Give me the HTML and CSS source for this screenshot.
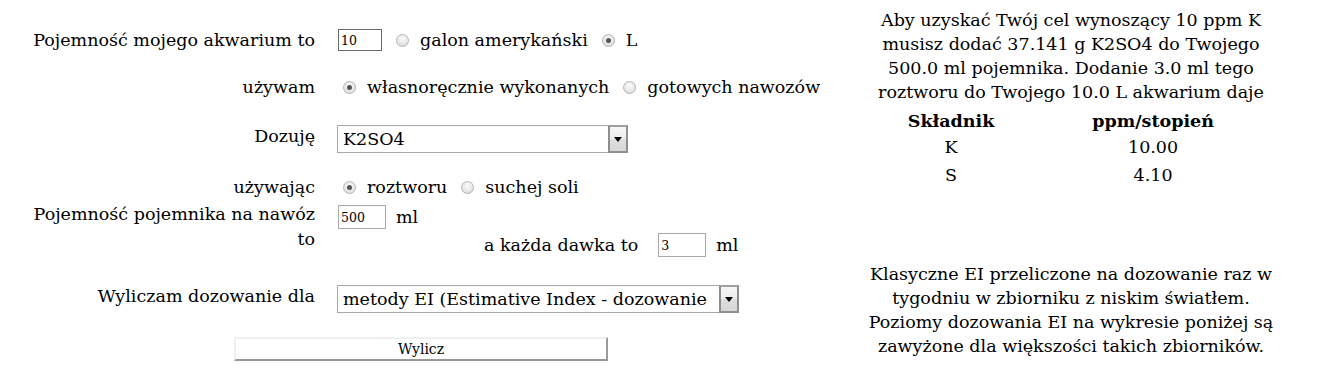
FILE: index.html
```html
<!DOCTYPE html>
<html lang="pl">
<head>
<meta charset="utf-8">
<title>Kalkulator nawozów</title>
<link rel="stylesheet" href="styles.css">
</head>
<body>
<div class="page">
  <form class="calc">
    <div class="row r1">
      <label class="lbl">Pojemność mojego akwarium to</label>
      <div class="ctl">
        <input class="num focus" type="text" value="10">
        <span class="radio"></span><span class="opt">galon amerykański</span>
        <span class="radio on"></span><span class="opt">L</span>
      </div>
    </div>
    <div class="row r2">
      <label class="lbl">używam</label>
      <div class="ctl">
        <span class="radio on first"></span><span class="opt">własnoręcznie wykonanych</span>
        <span class="radio"></span><span class="opt">gotowych nawozów</span>
      </div>
    </div>
    <div class="row r3">
      <label class="lbl">Dozuję</label>
      <div class="ctl">
        <div class="sel w1"><span class="val">K2SO4</span><span class="arrow"><span class="tri"></span></span></div>
      </div>
    </div>
    <div class="row r4">
      <label class="lbl">używając</label>
      <div class="ctl">
        <span class="radio on first"></span><span class="opt">roztworu</span>
        <span class="radio"></span><span class="opt">suchej soli</span>
      </div>
    </div>
    <div class="row r5">
      <label class="lbl two">Pojemność pojemnika na nawóz<br>to</label>
      <div class="ctl col">
        <div class="line"><input class="num w2" type="text" value="500"><span class="unit">ml</span></div>
        <div class="line dose"><span class="dlbl">a każda dawka to</span><input class="num w3" type="text" value="3"><span class="unit">ml</span></div>
      </div>
    </div>
    <div class="row r6">
      <label class="lbl">Wyliczam dozowanie dla</label>
      <div class="ctl">
        <div class="sel w4"><span class="val">metody EI (Estimative Index - dozowanie</span><span class="arrow"><span class="tri"></span></span></div>
      </div>
    </div>
    <div class="btnrow">
      <button type="button" class="btn">Wylicz</button>
    </div>
  </form>
  <aside class="result">
    <p class="msg">Aby uzyskać Twój cel wynoszący 10 ppm K<br>musisz dodać 37.141 g K2SO4 do Twojego<br>500.0 ml pojemnika. Dodanie 3.0 ml tego<br>roztworu do Twojego 10.0 L akwarium daje</p>
    <table class="tbl">
      <thead><tr><th class="c1">Składnik</th><th class="c2">ppm/stopień</th></tr></thead>
      <tbody>
        <tr><td class="c1">K</td><td class="c2">10.00</td></tr>
        <tr class="last"><td class="c1">S</td><td class="c2">4.10</td></tr>
      </tbody>
    </table>
    <p class="note">Klasyczne EI przeliczone na dozowanie raz w<br>tygodniu w zbiorniku z niskim światłem.<br>Poziomy dozowania EI na wykresie poniżej są<br>zawyżone dla większości takich zbiorników.</p>
  </aside>
</div>
</body>
</html>
```

FILE: styles.css
```css
html, body {
  margin: 0;
  padding: 0;
  background: #ffffff;
}
body {
  padding: 8px;
  font-family: "DejaVu Serif", Georgia, serif;
  font-size: 17.5px;
  color: #000;
}
.page {
  display: flex;
  align-items: flex-start;
}
.calc {
  width: 855px;
  flex: none;
  padding-top: 21px;
}
.row {
  display: grid;
  grid-template-columns: 307px 1fr;
  column-gap: 23px;
  align-items: center;
}
.lbl {
  text-align: right;
  white-space: nowrap;
  line-height: 22px;
}
.ctl {
  display: flex;
  align-items: center;
  white-space: nowrap;
}
.r1 { height: 22px; }
.r2 { height: 22px; margin-top: 25px; }
.r3 { height: 28px; margin-top: 27px; }
.r3 .lbl { align-self: start; }
.r4 { height: 22px; margin-top: 23px; }
.r5 { margin-top: 4px; align-items: start; }
.r5 .lbl.two { line-height: 25px; }
.r6 { height: 28px; margin-top: 28px; }
.r6 .lbl { align-self: start; line-height: 22px; }

.col {
  flex-direction: column;
  align-items: flex-start;
}
.line {
  display: flex;
  align-items: center;
  height: 24px;
  margin-top: 3px;
}
.line.dose {
  margin-top: 4px;
  padding-left: 146px;
}
.dlbl { margin-right: 20px; }

.num {
  box-sizing: border-box;
  width: 44px;
  height: 22px;
  border: 1px solid #a9a9a9;
  padding: 1px 2px 0;
  font-family: "DejaVu Serif", Georgia, serif;
  font-size: 12.5px;
  color: #000;
  background: #fff;
  margin: 0;
}
.num.focus { border-color: #6b6b6b; }
.num.w2 { width: 48px; height: 24px; }
.num.w3 { width: 48px; height: 24px; }
.unit { margin-left: 10px; }

.radio {
  box-sizing: border-box;
  width: 13px;
  height: 13px;
  border-radius: 50%;
  border: 1px solid #b4b4b4;
  background: radial-gradient(circle at 50% 35%, #fbfbfb 0%, #e6e6e6 60%, #d0d0d0 100%);
  margin: 0 5px 0 14px;
  display: inline-flex;
  align-items: center;
  justify-content: center;
  flex: none;
}
.radio.first { margin-left: 5px; }
.radio.on::after {
  content: "";
  width: 5px;
  height: 5px;
  border-radius: 50%;
  background: #555;
}
.opt { margin-left: 6px; }

.sel {
  box-sizing: border-box;
  height: 28px;
  display: flex;
  align-items: stretch;
  border: 1px solid #a9a9a9;
  background: #fff;
  margin-left: -1px;
}
.sel.w1 { width: 291px; }
.sel.w4 { width: 402px; }
.val {
  flex: 1;
  overflow: hidden;
  white-space: nowrap;
  padding-left: 5px;
  line-height: 27px;
  font-size: 17.5px;
}
.arrow {
  box-sizing: border-box;
  width: 20px;
  flex: none;
  border: 2px solid #8e8e8e;
  border-top-color: #a0a0a0;
  background: linear-gradient(#f6f6f6 0%, #ececec 50%, #dedede 51%, #d6d6d6 100%);
  display: flex;
  align-items: center;
  justify-content: center;
  margin: -1px -1px -1px 0;
}
.tri {
  width: 0;
  height: 0;
  border-left: 4px solid transparent;
  border-right: 4px solid transparent;
  border-top: 5px solid #000;
}

.btnrow {
  margin-top: 24px;
  padding-left: 226px;
}
.btn {
  box-sizing: border-box;
  width: 374px;
  height: 24px;
  background: #fff;
  border: 2px solid;
  border-color: #f0f0f0 #9a9a9a #9a9a9a #f0f0f0;
  font-family: "DejaVu Serif", Georgia, serif;
  font-size: 14px;
  color: #000;
  padding: 0;
}

.result {
  width: 420px;
  flex: none;
  text-align: center;
  margin-left: -2px;
}
.msg, .note {
  margin: 0;
  line-height: 24px;
}
.tbl {
  border-collapse: collapse;
  margin: 3px 0 0 16px;
}
.tbl th {
  font-weight: bold;
  padding: 2px 0 0;
  height: 24px;
}
.tbl td {
  height: 28px;
  padding: 0;
}
.tbl .c1 { width: 150px; }
.tbl .c2 { width: 260px; }
.note {
  margin-top: 73px;
}
```
